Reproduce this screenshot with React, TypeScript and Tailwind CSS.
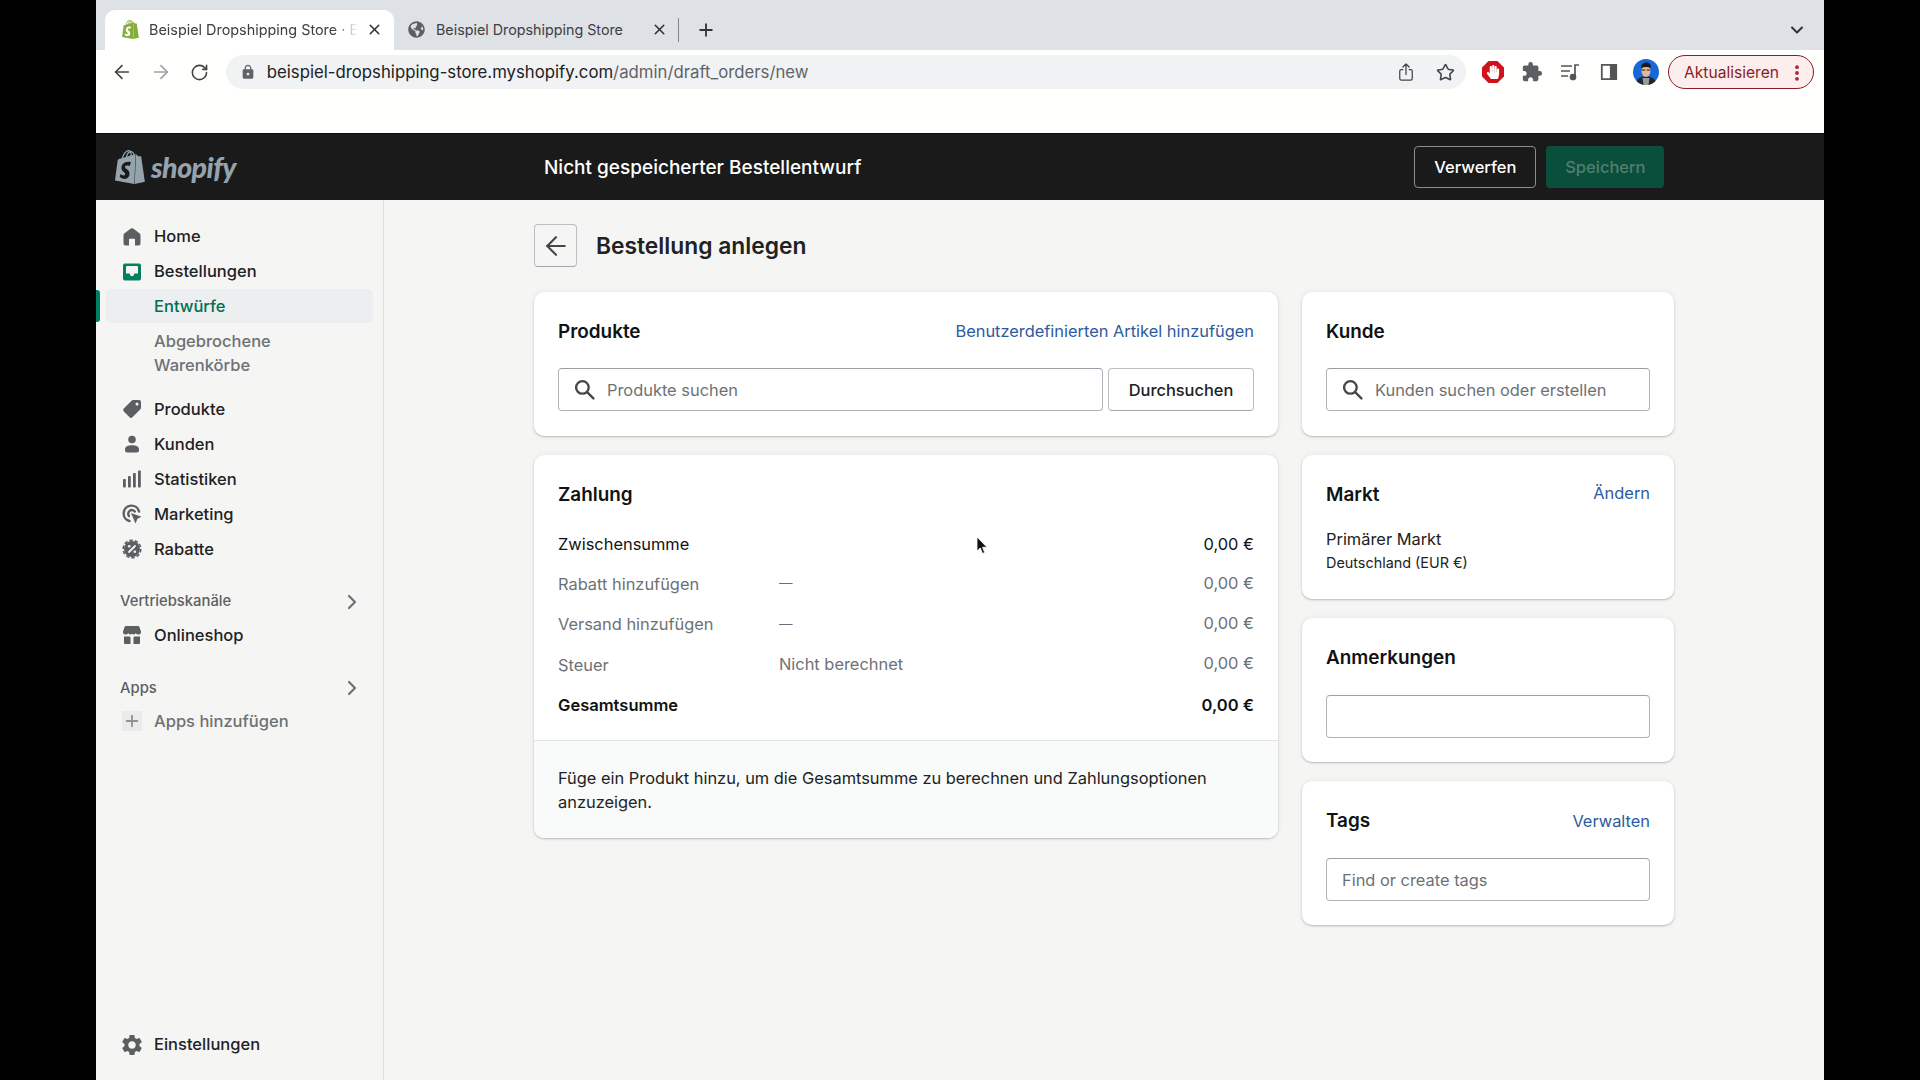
import React from "react";
import { ArrowLeft, ArrowRight, RotateCw, X, Plus, ChevronDown, ChevronRight, Star, MoreVertical } from "lucide-react";
import { MdLock, MdExtension, MdSettings } from "react-icons/md";
import { IoShareOutline } from "react-icons/io5";
import { FaGlobeAmericas, FaHandPaper } from "react-icons/fa";
import { SiShopify } from "react-icons/si";

const C = "#5c5f62";
const Ico = ({ children }: { children: React.ReactNode }) => (
  <svg viewBox="0 0 20 20" className="w-[20px] h-[20px] shrink-0" fill={C} fillRule="evenodd">{children}</svg>
);
const HomeI = () => <Ico><path d="M18.5 8v8.5a2 2 0 0 1-2 2H13v-6a.8.8 0 0 0-.8-.8H7.8a.8.8 0 0 0-.8.8v6H3.5a2 2 0 0 1-2-2V8a2 2 0 0 1 .8-1.6l6.5-4.8a2 2 0 0 1 2.4 0l6.5 4.8a2 2 0 0 1 .8 1.6z" /></Ico>;
const OrdersI = () => <Ico><path fill="#008060" d="M3 1.500h14a2 2 0 0 1 2 2v13a2 2 0 0 1-2 2H3a2 2 0 0 1-2-2v-13a2 2 0 0 1 2-2zM5 4a1 1 0 0 0-1 1v6.500h3.200a.8.8 0 0 1 .8.7 2 2 0 0 0 4 0 .8.8 0 0 1 .8-.7H16V5a1 1 0 0 0-1-1z" /></Ico>;
const TagI = () => <Ico><path d="M11.200 1H17a2 2 0 0 1 2 2v5.800a2 2 0 0 1-.6 1.400l-8 8a2 2 0 0 1-2.800 0l-5.800-5.800a2 2 0 0 1 0-2.800l8-8a2 2 0 0 1 1.400-.6zM15 3.500a1.500 1.500 0 1 0 0 3 1.500 1.500 0 0 0 0-3z" /></Ico>;
const UserI = () => <Ico><circle cx="10" cy="5.500" r="3.800" /><path d="M3 15c0-2.500 3-3.800 7-3.800s7 1.300 7 3.800v1a2.500 2.500 0 0 1-2.500 2.500h-9A2.500 2.500 0 0 1 3 16z" /></Ico>;
const StatsI = () => <Ico><rect x="1" y="10" width="2.800" height="8.500" rx=".8" /><rect x="6" y="7" width="2.800" height="11.500" rx=".8" /><rect x="11" y="4" width="2.800" height="14.500" rx=".8" /><rect x="16" y="1.500" width="2.800" height="17" rx=".8" /></Ico>;
const MarketingI = () => <Ico><path fill="none" stroke={C} strokeWidth="2.400" strokeLinecap="round" d="M17 7.500A7.800 7.800 0 1 0 7.500 17" /><path fill="none" stroke={C} strokeWidth="2.400" strokeLinecap="round" d="M12.800 7.500A3.600 3.600 0 1 0 7 12" /><path d="M9 9l10.500 3.800-4 2L13.500 19.500z" /></Ico>;
const DiscountI = () => <Ico><circle cx="10" cy="10" r="8" /><circle cx="10" cy="10" r="8.800" fill="none" stroke={C} strokeWidth="1.600" strokeDasharray="3.400 2.100" /><path stroke="#f5f5f4" strokeWidth="1.800" strokeLinecap="round" d="M7 13l6-6" /><circle cx="7.200" cy="7.200" r="1.300" fill="#f5f5f4" /><circle cx="12.800" cy="12.800" r="1.300" fill="#f5f5f4" /></Ico>;
const StoreI = () => <Ico><path d="M4 1h12a1.500 1.500 0 0 1 1.400 1l1.600 4.500a2.700 2.700 0 0 1-2.700 3 3 3 0 0 1-2.500-1.200 3.200 3.200 0 0 1-3.800.8 3.200 3.200 0 0 1-3.800-.8 3 3 0 0 1-2.500 1.200A2.700 2.700 0 0 1 1 6.500L2.600 2A1.500 1.500 0 0 1 4 1z" /><path d="M2 11.500h5.500a1 1 0 0 1 1 1v6.500H3a1 1 0 0 1-1-1zM11.500 12.500a1 1 0 0 1 1-1H18v6.500a1 1 0 0 1-1 1h-5.500z" /></Ico>;
const SearchI = () => (
  <svg viewBox="0 0 20 20" className="ml-[15px] mr-[13px] w-[21px] h-[21px] shrink-0" fill="none" stroke="#44474a" strokeWidth="2.200" strokeLinecap="round"><circle cx="8" cy="8" r="6" /><path d="M12.500 12.500L18.500 18.500" /></svg>
);

const Row = ({ icon, children }: { icon: React.ReactNode; children: React.ReactNode }) => (
  <div className="h-[35px] pt-[2px] pl-[26px] flex items-center gap-[12px] text-[#202223] text-[16.5px] font-medium">
    {icon}
    <span>{children}</span>
  </div>
);

const Head = ({ children, h }: { children: React.ReactNode; h: string }) => (
  <div className={h + " pl-[24px] pr-[19px] flex items-center justify-between text-[14.8px] font-medium text-[#5c5f62]"}>
    <span>{children}</span>
    <ChevronRight size={24} strokeWidth={2.2} color="#6d7175" />
  </div>
);

const Sidebar = () => (
  <aside className="w-[288px] shrink-0 h-full border-r border-[#dcdddd] bg-[#f5f5f4] flex flex-col pt-[18px] pb-[19px]">
    <Row icon={<HomeI />}>Home</Row>
    <Row icon={<OrdersI />}>Bestellungen</Row>
    <div className="h-[34px] mt-[0.5px] flex items-stretch">
      <div className="w-[4px] my-[1px] rounded-r-[3px] bg-[#008060]" />
      <div className="ml-[6px] w-[267px] rounded-[5px] bg-[#edeeef] pl-[48px] pt-[2px] flex items-center text-[16.5px] font-medium text-[#006e52]">Entwürfe</div>
    </div>
    <div className="mt-[6px] pl-[58px] text-[16.5px] leading-[24px] font-medium text-[#6d7175]">
      Abgebrochene<br />Warenkörbe
    </div>
    <div className="mt-[14px]">
      <Row icon={<TagI />}>Produkte</Row>
      <Row icon={<UserI />}>Kunden</Row>
      <Row icon={<StatsI />}>Statistiken</Row>
      <Row icon={<MarketingI />}>Marketing</Row>
      <Row icon={<DiscountI />}>Rabatte</Row>
    </div>
    <div className="mt-[21px]"><Head h="h-[30px]">Vertriebskanäle</Head></div>
    <Row icon={<StoreI />}>Onlineshop</Row>
    <div className="mt-[21px]"><Head h="h-[31px]">Apps</Head></div>
    <div className="h-[35px] pl-[26px] flex items-center gap-[12px] text-[16.5px] font-medium text-[#6d7175]">
      <div className="w-[20px] h-[20px] bg-[#ebebeb] flex items-center justify-center"><Plus size={18} strokeWidth={2.4} color="#8c9196" /></div>
      <span>Apps hinzufügen</span>
    </div>
    <div className="mt-auto">
      <Row icon={<MdSettings size={23} color={C} className="w-[20px] h-[20px] scale-125 shrink-0" />}>Einstellungen</Row>
    </div>
  </aside>
);

const Card = ({ children, className = "" }: { children: React.ReactNode; className?: string }) => (
  <section className={"rounded-[10px] bg-white shadow-[0_0_6px_rgba(23,24,24,0.06),0_1px_2px_rgba(0,0,0,0.22)] " + className}>{children}</section>
);

const CardHead = ({ title, link, linkClass = "" }: { title: string; link?: string; linkClass?: string }) => (
  <div className="h-[30px] flex items-center justify-between">
    <h2 className="pt-[2px] text-[18.9px] font-semibold text-[#111213]">{title}</h2>
    {link && <a className={"text-[16.4px] text-[#2c5a9e] " + linkClass}>{link}</a>}
  </div>
);

const Field = ({ text, search, className = "" }: { text?: string; search?: boolean; className?: string }) => (
  <div className={"h-[43px] rounded-[4px] bg-white border border-[#aeb4b9] border-t-[#9a9fa4] flex items-center text-[16.4px] text-[#6d7175] " + className}>
    {search && <SearchI />}
    {text && <span className={"pt-[2px] " + (search ? "-ml-[1px]" : "ml-[15px]")}>{text}</span>}
  </div>
);

const PayRow = ({ a, b, c, strong, muted, dash }: { a: string; b?: string; c: string; strong?: boolean; muted?: boolean; dash?: boolean }) => (
  <div className={"h-[40.25px] flex items-center " + (strong ? "text-[16.55px] font-semibold " : "text-[16.4px] ") + (muted ? "text-[#6d7175]" : "text-[#111213]")}>
    <span className="w-[221px]">{a}</span>
    <span className={"flex-1 pb-[2px] " + (dash ? "text-[13.5px]" : "")}>{b}</span>
    <span className={muted ? "pb-[3px]" : ""}>{c}</span>
  </div>
);

const Browser = () => (
  <header className="h-[133px] shrink-0 bg-[#fffffd]">
    <div className="h-[50px] bg-[#dee1e6] flex items-end pl-[9px] pr-[17px]">
      <div className="w-[289px] h-[40.5px] rounded-t-[10px] bg-white flex items-center pl-[16px]">
        <SiShopify size={19} color="#86ad3c" className="shrink-0" />
        <span className="ml-[9px] w-[209px] overflow-hidden whitespace-nowrap text-[14.4px] text-[#3c4043] [mask-image:linear-gradient(to_right,black_88%,transparent)]">Beispiel Dropshipping Store · Ex</span>
        <X size={17} strokeWidth={2.2} color="#333" className="ml-[8px]" />
      </div>
      <div className="h-[40.5px] flex items-center pl-[14px]">
        <FaGlobeAmericas size={17} color={C} />
        <span className="ml-[11px] w-[186px] whitespace-nowrap text-[14.3px] text-[#3c4043]">Beispiel Dropshipping Store</span>
        <X size={17} strokeWidth={2.2} color="#333" className="ml-[29px]" />
        <div className="ml-[10px] w-px h-[24px] bg-[#80868b]" />
        <Plus size={20} strokeWidth={2.2} color="#333" className="ml-[17px]" />
      </div>
      <div className="ml-auto h-[40.5px] flex items-center"><ChevronDown size={20} strokeWidth={2.4} color="#333" /></div>
    </div>
    <div className="h-[34px] mt-[5px] flex items-center pl-[15px] pr-[10px]">
      <ArrowLeft size={22} strokeWidth={1.8} color="#454545" />
      <ArrowRight size={22} strokeWidth={1.8} color="#9aa0a6" className="ml-[17px]" />
      <RotateCw size={19} strokeWidth={2} color="#454545" className="ml-[18px]" />
      <div className="ml-[17px] w-[1245px] h-[34px] rounded-full bg-[#f0f2f4] flex items-center pl-[14px]">
        <MdLock size={16} color="#5f6368" />
        <span className="ml-[11px] pt-[2px] text-[16.75px] text-[#202124] whitespace-nowrap">beispiel-dropshipping-store.myshopify.com<span className="text-[#5f6368]">/admin/draft_orders/new</span></span>
        <IoShareOutline size={20} color="#444" className="ml-auto" />
        <Star size={19} strokeWidth={2} color="#444" className="ml-[20px] mr-[11px]" />
      </div>
      <svg viewBox="0 0 20 20" className="ml-[16px] w-[22px] h-[22px] shrink-0"><path fill="#d1121c" d="M6 0h8l6 6v8l-6 6H6l-6-6V6z" /></svg>
      <FaHandPaper size={14} color="#fff" className="-ml-[18px] shrink-0" />
      <MdExtension size={22} color={C} className="ml-[21px] shrink-0" />
      <svg viewBox="0 0 20 20" className="ml-[17px] w-[20px] h-[20px] shrink-0" fill="none" stroke="#555" strokeWidth="1.700"><path d="M1 4h11M1 9h9M1 14h7M15 15V3h4" /><circle cx="13" cy="15" r="2.500" fill="#555" /></svg>
      <svg viewBox="0 0 20 20" className="ml-[20px] w-[18px] h-[18px] shrink-0"><path fill="none" stroke="#555" strokeWidth="2" d="M2 2h16v16H2z" /><path fill="#555" d="M11 2h7v16h-7z" /></svg>
      <svg viewBox="0 0 26 26" className="ml-[15px] w-[26px] h-[26px] shrink-0">
        <circle cx="13" cy="13" r="13" fill="#1768d8" />
        <path fill="#23262b" d="M3.500 22c2-3.500 5-4.500 9.500-4.500s7.500 1 9.500 4.500A13 13 0 0 1 13 26a13 13 0 0 1-9.500-4z" />
        <path fill="#9a9a9a" d="M9.500 19h7l-1 7h-5z" />
        <ellipse cx="13" cy="12" rx="4.500" ry="6" fill="#e3b899" />
        <path fill="#1b1b1b" d="M8 9c0-4 3-5.500 5.500-5.500S18 5 18 9c-3-1.500-7-1.500-10 0z" />
        <path fill="none" stroke="#111" strokeWidth=".9" d="M8.800 11h3.400M13.800 11h3.400" />
      </svg>
      <div className="ml-[9px] w-[146px] h-[34px] rounded-full border border-[#8a1c28] bg-[#fdeeee] flex items-center pl-[15px] pt-[1px] text-[15.6px] text-[#8a1c28] shrink-0">
        Aktualisieren
        <MoreVertical size={20} strokeWidth={2.6} color="#a1293a" className="ml-auto mr-[6px]" />
      </div>
    </div>
  </header>
);

const AppBar = () => (
  <div className="h-[67px] shrink-0 bg-[#1a1a1a] border-t border-[#0c0c0c] flex items-center">
    <div className="w-[448px] pl-[17px] flex items-center gap-[4px] shrink-0">
      <SiShopify size={34} color="#95a3ad" />
      <span className="font-['Lato'] italic font-black text-[28.5px] leading-none tracking-[-0.5px] text-[#95a3ad]">shopify</span>
    </div>
    <div className="pt-[2px] text-[19px] font-medium text-white">Nicht gespeicherter Bestellentwurf</div>
    <div className="ml-[553px] w-[122px] h-[42px] mb-[1px] pt-[1px] rounded-[4px] border border-[#8a8c8e] flex items-center justify-center text-[16.5px] font-medium text-white">Verwerfen</div>
    <div className="ml-[10px] w-[118px] h-[42px] mb-[1px] pt-[1px] rounded-[4px] bg-[#0a4f3b] flex items-center justify-center text-[16.5px] font-medium text-[#4f7f6e]">Speichern</div>
  </div>
);

const Cursor = () => (
  <svg viewBox="0 0 12 20" className="absolute left-[592px] top-[336px] w-[12px] h-[20px]">
    <path d="M1 1v14l3.300-3 2.200 5.500 2.200-1-2.200-5.200H11z" fill="#111" stroke="#fff" strokeWidth=".8" />
  </svg>
);

const Main = () => (
  <main className="relative flex-1 pl-[150px] pt-[24px] bg-[#f5f5f4]">
    <div className="flex items-center">
      <div className="w-[43px] h-[43px] rounded-[4px] border border-[#babfc3] border-b-[#a3a8ad] flex items-center justify-center">
        <ArrowLeft size={30} strokeWidth={1.7} color="#44474a" />
      </div>
      <h1 className="ml-[19px] pt-[2px] text-[22.8px] font-semibold text-[#202223]">Bestellung anlegen</h1>
    </div>
    <div className="mt-[25px] flex items-start gap-[24px]">
      <div className="w-[744px] flex flex-col gap-[19px]">
        <Card className="px-[24px] pt-[24px] pb-[25px]">
          <CardHead title="Produkte" link="Benutzerdefinierten Artikel hinzufügen" />
          <div className="mt-[22px] flex gap-[5px]">
            <Field search text="Produkte suchen" className="flex-1" />
            <div className="w-[146px] h-[43px] pt-[2px] rounded-[4px] border border-[#babfc3] border-b-[#a3a8ad] flex items-center justify-center text-[16.4px] font-medium text-[#202223]">Durchsuchen</div>
          </div>
        </Card>
        <Card className="overflow-hidden">
          <div className="px-[24px] pt-[24px] pb-[15px]">
            <CardHead title="Zahlung" />
            <div className="mt-[15px]">
              <PayRow a="Zwischensumme" c="0,00 €" />
              <PayRow muted dash a="Rabatt hinzufügen" b="—" c="0,00 €" />
              <PayRow muted dash a="Versand hinzufügen" b="—" c="0,00 €" />
              <PayRow muted a="Steuer" b="Nicht berechnet" c="0,00 €" />
              <PayRow strong a="Gesamtsumme" c="0,00 €" />
            </div>
          </div>
          <div className="border-t border-[#e1e3e5] bg-[#f9fafa] px-[24px] pt-[25px] pb-[24px] text-[16.4px] leading-[24px] text-[#202223]">
            Füge ein Produkt hinzu, um die Gesamtsumme zu berechnen und Zahlungsoptionen anzuzeigen.
          </div>
        </Card>
      </div>
      <div className="w-[372px] flex flex-col gap-[19px]">
        <Card className="px-[24px] pt-[24px] pb-[25px]">
          <CardHead title="Kunde" />
          <Field search text="Kunden suchen oder erstellen" className="mt-[22px]" />
        </Card>
        <Card className="px-[24px] pt-[24px] pb-[24px]">
          <CardHead title="Markt" link="Ändern" linkClass="pb-[2px]" />
          <div className="mt-[18px] text-[16.4px] leading-[24px] text-[#202223]">Primärer Markt</div>
          <div className="text-[14.4px] leading-[24px] text-[#202223]">Deutschland (EUR €)</div>
        </Card>
        <Card className="px-[24px] pt-[24px] pb-[24px]">
          <CardHead title="Anmerkungen" />
          <Field className="mt-[23px]" />
        </Card>
        <Card className="px-[24px] pt-[24px] pb-[24px] bg-[#fafbfb]">
          <CardHead title="Tags" link="Verwalten" linkClass="pt-[3px]" />
          <Field text="Find or create tags" className="mt-[23px]" />
        </Card>
      </div>
    </div>
    <Cursor />
  </main>
);

export default function App() {
  return (
    <div className="w-[1920px] h-[1080px] overflow-hidden bg-black px-[96px] font-['Inter',sans-serif]">
      <div className="w-[1728px] h-full flex flex-col">
        <Browser />
        <AppBar />
        <div className="flex-1 min-h-0 flex">
          <Sidebar />
          <Main />
        </div>
      </div>
    </div>
  );
}
